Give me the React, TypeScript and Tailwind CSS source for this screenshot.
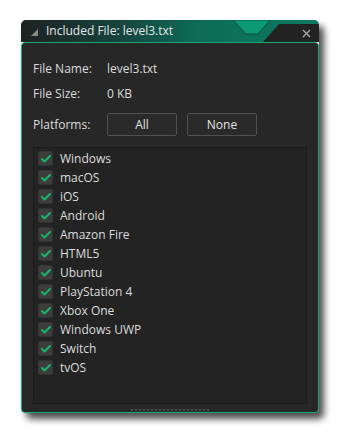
import { Check } from 'lucide-react';

const platforms = [
  'Windows',
  'macOS',
  'iOS',
  'Android',
  'Amazon Fire',
  'HTML5',
  'Ubuntu',
  'PlayStation 4',
  'Xbox One',
  'Windows UWP',
  'Switch',
  'tvOS',
];

function HeaderDecor() {
  // notch + dark corner where the close button sits
  return (
    <svg className="absolute inset-0" width="298" height="22" viewBox="0 0 298 22">
      <polygon points="212,0 249,0 237,14 225,14" fill="#0c9a74" stroke="#07503f" strokeWidth="1" />
      <polygon points="258,4 298,4 298,22 242,22" fill="#222222" />
    </svg>
  );
}

export default function App() {
  return (
    <div className="w-[340px] h-[434px] bg-white pt-[20px] pl-[21px] font-['Open_Sans',sans-serif]">
      <div className="w-[298px] h-[393px] flex flex-col rounded-[5px] shadow-[5px_6px_7px_rgba(0,0,0,0.7)]">
        {/* Title bar */}
        <div className="relative h-[22px] rounded-t-[5px] overflow-hidden bg-[linear-gradient(90deg,#1e2222_0%,#17403a_30%,#0d6c58_60%,#0b7a62_100%)]">
          <HeaderDecor />
          <div className="relative flex items-center h-full pl-[10px]">
            <svg width="7" height="7" viewBox="0 0 7 7" className="mt-[2px]">
              <polygon points="7,0 7,7 0,7" fill="#8a8a8a" />
            </svg>
            <span className="ml-[8px] text-[12px] leading-none text-[#e6e6e6]">Included File: level3.txt</span>
          </div>
          <svg className="absolute right-[8px] top-[9px]" width="9" height="9" viewBox="0 0 9 9">
            <path d="M1 1 L8 8 M8 1 L1 8" stroke="#a8a8a8" strokeWidth="1.4" />
          </svg>
        </div>

        {/* Body */}
        <div className="flex-1 flex flex-col border border-[#18a870] rounded-[4px] bg-[#272727] px-[11px] pt-[18px] text-[12px] text-[#dcdcdc]">
          <div className="flex h-[16px] items-center">
            <span className="w-[74px]">File Name:</span>
            <span>level3.txt</span>
          </div>
          <div className="flex h-[16px] items-center mt-[9px]">
            <span className="w-[74px]">File Size:</span>
            <span>0 KB</span>
          </div>
          <div className="flex items-center mt-[11px]">
            <span className="w-[74px]">Platforms:</span>
            <button className="w-[70px] h-[23px] border border-[#505050] rounded-[2px] bg-[#2a2a2a] text-[#e2e2e2]">All</button>
            <button className="ml-[10px] w-[70px] h-[23px] border border-[#505050] rounded-[2px] bg-[#2a2a2a] text-[#e2e2e2]">None</button>
          </div>

          <div className="mt-[11px] h-[257px] border border-[#1b1b1b] bg-[#232323] pt-[1px] pl-[4px]">
            {platforms.map((p) => (
              <div key={p} className="flex items-center h-[19px]">
                <div className="w-[15px] h-[15px] rounded-[2px] bg-[#3d3d3d] border border-[#333] flex items-center justify-center">
                  <Check className="w-[12px] h-[12px] text-[#17b56c]" strokeWidth={4} />
                </div>
                <span className="ml-[7px]">{p}</span>
              </div>
            ))}
          </div>

          <div className="mx-auto mt-[5px] w-[78px] h-[2px] bg-[repeating-linear-gradient(90deg,#4c4c4c_0_2px,transparent_2px_4px)]" />
        </div>
      </div>
    </div>
  );
}
